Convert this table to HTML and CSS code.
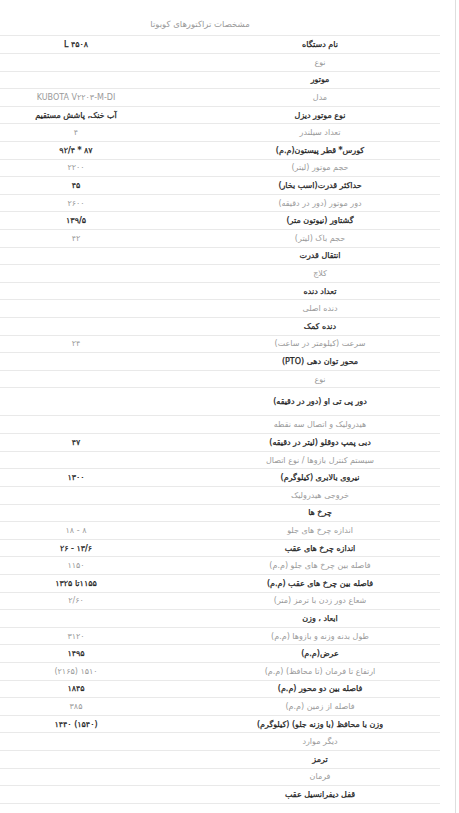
FILE: index.html
```html
<!DOCTYPE html>
<html lang="fa" dir="rtl">
<head>
<meta charset="utf-8">
<title>مشخصات تراکتورهای کوبوتا</title>
<link rel="stylesheet" href="styles.css">
</head>
<body>
<div class="page">
  <div class="spec">
    <div class="title">مشخصات تراکتورهای کوبوتا</div>
    <div class="rows">
      <div class="row strong"><span class="key">نام دستگاه</span><span class="val">L ۴۵۰۸</span></div>
      <div class="row"><span class="key">نوع</span><span class="val"></span></div>
      <div class="row strong"><span class="key">موتور</span><span class="val"></span></div>
      <div class="row"><span class="key">مدل</span><span class="val">KUBOTA V۲۲۰۳-M-DI</span></div>
      <div class="row strong"><span class="key">نوع موتور دیزل</span><span class="val">آب خنک، پاشش مستقیم</span></div>
      <div class="row"><span class="key">تعداد سیلندر</span><span class="val">۴</span></div>
      <div class="row strong"><span class="key">کورس* قطر پیستون(م.م)</span><span class="val">۸۷ * ۹۲/۴</span></div>
      <div class="row"><span class="key">حجم موتور (لیتر)</span><span class="val">۲۲۰۰</span></div>
      <div class="row strong"><span class="key">حداکثر قدرت(اسب بخار)</span><span class="val">۴۵</span></div>
      <div class="row"><span class="key">دور موتور (دور در دقیقه)</span><span class="val">۲۶۰۰</span></div>
      <div class="row strong"><span class="key">گشتاور (نیوتون متر)</span><span class="val">۱۳۹/۵</span></div>
      <div class="row"><span class="key">حجم باک (لیتر)</span><span class="val">۴۲</span></div>
      <div class="row strong"><span class="key">انتقال قدرت</span><span class="val"></span></div>
      <div class="row"><span class="key">کلاچ</span><span class="val"></span></div>
      <div class="row strong"><span class="key">تعداد دنده</span><span class="val"></span></div>
      <div class="row"><span class="key">دنده اصلی</span><span class="val"></span></div>
      <div class="row strong"><span class="key">دنده کمک</span><span class="val"></span></div>
      <div class="row"><span class="key">سرعت (کیلومتر در ساعت)</span><span class="val">۲۴</span></div>
      <div class="row strong"><span class="key">محور توان دهی (PTO)</span><span class="val"></span></div>
      <div class="row"><span class="key">نوع</span><span class="val"></span></div>
      <div class="row strong tall"><span class="key">دور پی تی او (دور در دقیقه)</span><span class="val"></span></div>
      <div class="row"><span class="key">هیدرولیک و اتصال سه نقطه</span><span class="val"></span></div>
      <div class="row strong"><span class="key">دبی پمپ دوقلو (لیتر در دقیقه)</span><span class="val">۴۷</span></div>
      <div class="row"><span class="key">سیستم کنترل بازوها / نوع اتصال</span><span class="val"></span></div>
      <div class="row strong"><span class="key">نیروی بالابری (کیلوگرم)</span><span class="val">۱۳۰۰</span></div>
      <div class="row"><span class="key">خروجی هیدرولیک</span><span class="val"></span></div>
      <div class="row strong"><span class="key">چرخ ها</span><span class="val"></span></div>
      <div class="row"><span class="key">اندازه چرخ های جلو</span><span class="val">۸ - ۱۸</span></div>
      <div class="row strong"><span class="key">اندازه چرخ های عقب</span><span class="val">۱۳/۶ - ۲۶</span></div>
      <div class="row"><span class="key">فاصله بین چرخ های جلو (م.م)</span><span class="val">۱۱۵۰</span></div>
      <div class="row strong"><span class="key">فاصله بین چرخ های عقب (م.م)</span><span class="val">۱۱۵۵تا ۱۳۲۵</span></div>
      <div class="row"><span class="key">شعاع دور زدن با ترمز (متر)</span><span class="val">۲/۶۰</span></div>
      <div class="row strong"><span class="key">ابعاد ، وزن</span><span class="val"></span></div>
      <div class="row"><span class="key">طول بدنه وزنه و بازوها (م.م)</span><span class="val">۳۱۲۰</span></div>
      <div class="row strong"><span class="key">عرض(م.م)</span><span class="val">۱۴۹۵</span></div>
      <div class="row"><span class="key">ارتفاع تا فرمان (تا محافظ) (م.م)</span><span class="val">۱۵۱۰ (۲۱۶۵)</span></div>
      <div class="row strong"><span class="key">فاصله بین دو محور (م.م)</span><span class="val">۱۸۴۵</span></div>
      <div class="row"><span class="key">فاصله از زمین (م.م)</span><span class="val">۳۸۵</span></div>
      <div class="row strong"><span class="key">وزن با محافظ (با وزنه جلو) (کیلوگرم)</span><span class="val">(۱۵۴۰) ۱۴۴۰</span></div>
      <div class="row"><span class="key">دیگر موارد</span><span class="val"></span></div>
      <div class="row strong"><span class="key">ترمز</span><span class="val"></span></div>
      <div class="row"><span class="key">فرمان</span><span class="val"></span></div>
      <div class="row strong"><span class="key">قفل دیفرانسیل عقب</span><span class="val"></span></div>
    </div>
  </div>
</div>
</body>
</html>
```
FILE: styles.css
```css
html, body {
  margin: 0;
  padding: 0;
  background: #fff;
}
body {
  font-family: "DejaVu Sans", "Noto Sans", sans-serif;
  font-size: 8px;
  color: #333;
}
.page {
  width: 455px;
  min-height: 813px;
  margin-right: auto;
  margin-left: 0;
  border-right: 1px solid #dedede;
}
.spec {
  width: 440px;
  margin-right: auto;
  margin-left: 0;
  padding-top: 18px;
}
.title {
  height: 17.3px;
  line-height: 13px;
  font-size: 8.5px;
  text-align: center;
  color: #9a9a9a;
  padding-right: 40px;
  box-sizing: border-box;
}
.rows {
  border-bottom: 1px solid #e9e9e9;
}
.row {
  display: grid;
  grid-template-columns: 240px 48px 152px;
  grid-template-areas: "key gap val";
  align-items: center;
  height: 17.62px;
  box-sizing: border-box;
  border-top: 1px solid #e9e9e9;
  color: #9a9a9a;
}
.row.tall {
  height: 28px;
}
.key {
  grid-area: key;
  text-align: center;
  white-space: nowrap;
}
.val {
  grid-area: val;
  text-align: center;
  white-space: nowrap;
}
.row.strong {
  color: #1e1e1e;
  -webkit-text-stroke: 0.25px #1e1e1e;
}
```
